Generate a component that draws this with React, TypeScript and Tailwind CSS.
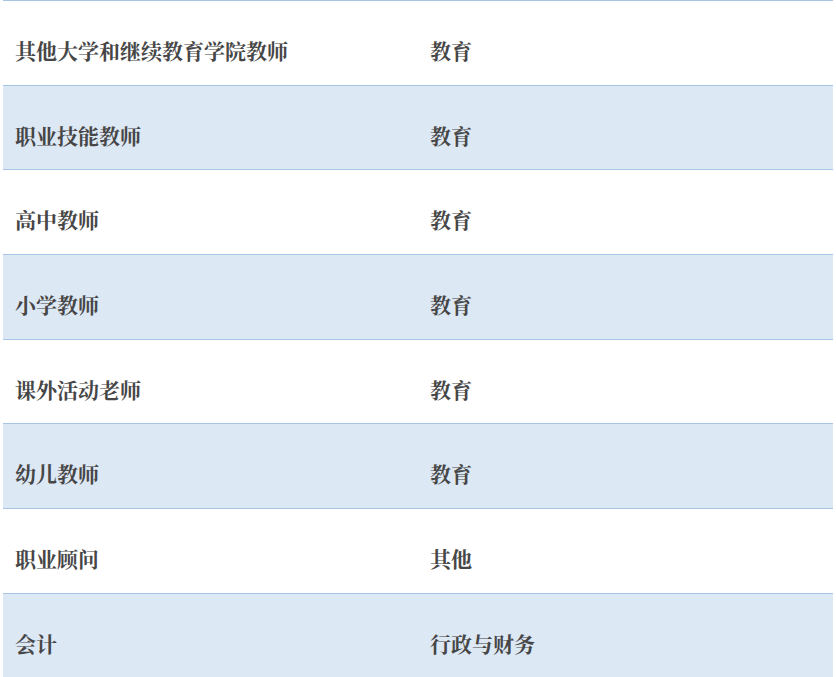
import React from "react";

const rows: [string, string][] = [
  ["其他大学和继续教育学院教师", "教育"],
  ["职业技能教师", "教育"],
  ["高中教师", "教育"],
  ["小学教师", "教育"],
  ["课外活动老师", "教育"],
  ["幼儿教师", "教育"],
  ["职业顾问", "其他"],
  ["会计", "行政与财务"],
];

export default function App() {
  return (
    <div className="w-[836px] h-[677px] overflow-hidden bg-white px-[3px]">
      <div
        className="w-[830px] text-[21px] font-bold text-[#464646]"
        style={{ fontFamily: '"Noto Serif CJK SC", "Noto Sans CJK SC", serif' }}
      >
        {rows.map(([a, b], i) => (
          <div
            key={i}
            className={`flex h-[84.7px] border-t border-[#a7c6e6] ${i % 2 === 1 ? "bg-[#dde8f5]" : "bg-white"}`}
          >
            <div className="w-[415px] pl-[12px] pt-[33px] leading-[32px]">{a}</div>
            <div className="flex-1 pl-[12px] pt-[33px] leading-[32px]">{b}</div>
          </div>
        ))}
      </div>
    </div>
  );
}
